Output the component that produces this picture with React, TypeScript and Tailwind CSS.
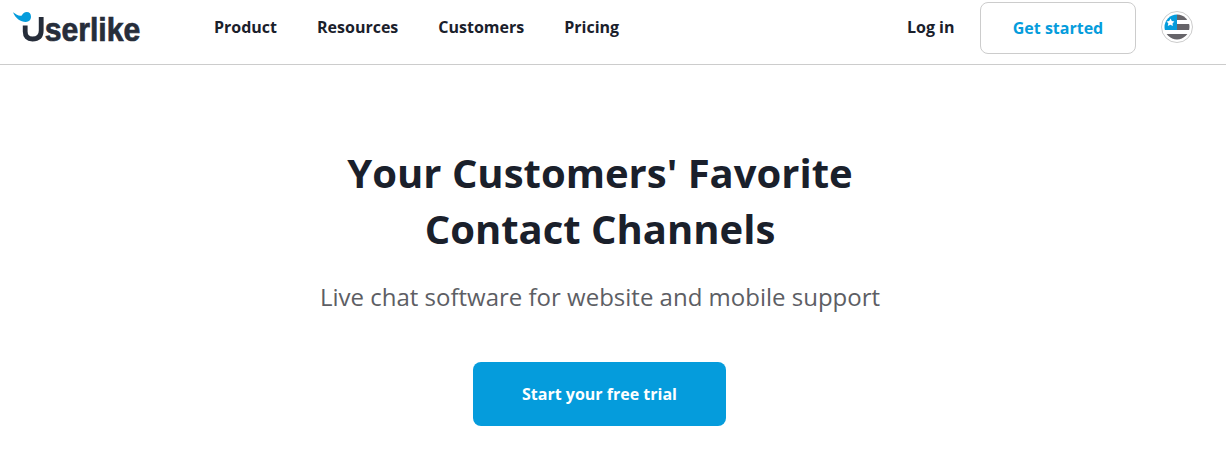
export default function App() {
  return (
    <div className="h-[466px] w-full overflow-hidden bg-white font-['Open_Sans',sans-serif] text-[#1a202b]">
      <header className="flex h-[65px] items-start border-b border-[#cccccc] pl-[13px] pr-[33px]">
        <a className="mt-[10px] block h-9 w-[128px]" aria-label="Userlike">
          <svg className="overflow-visible" width="128" height="36" viewBox="0 0 128 36">
            <path d="M0 2.3C3.5 4.8 6.5 6.6 8.8 5.4C10 3.3 11.3 2 13.8 2C16.5 2 18 4 18 6.8C18 9.8 16 12 12.8 12C7.5 12 2.6 8.6 0 2.3Z" fill="#059cdc" />
            <path d="M12.2 15.5V21.5Q12.2 29 19.4 29Q28.2 29 28.2 20.5V7" fill="none" stroke="#262d3a" strokeWidth="4.8" />
            <text x="31.7" y="30.8" fontFamily="Liberation Sans, sans-serif" fontWeight="700" fontSize="33" textLength="95.6" lengthAdjust="spacingAndGlyphs" fill="#262d3a" stroke="#262d3a" strokeWidth="0.7">serlike</text>
          </svg>
        </a>
        <nav className="ml-[73px] mt-[15px] flex gap-10 text-base font-bold leading-6">
          <a>Product</a><a>Resources</a><a>Customers</a><a>Pricing</a>
        </nav>
        <div className="ml-auto flex items-start font-bold">
          <a className="mt-[15px] leading-6">Log in</a>
          <button className="ml-[25.5px] mt-[2px] h-[52px] w-[156px] rounded-lg border border-[#cccccc] font-bold text-[#059cdc]">Get started</button>
          <button className="ml-[25px] mt-[11px] size-8" aria-label="Language">
            <svg width="32" height="32" viewBox="0 0 32 32">
              <defs><clipPath id="flag"><circle cx="16" cy="16" r="12.5" /></clipPath></defs>
              <circle cx="16" cy="16" r="15.5" fill="#fff" stroke="#cccccc" />
              <g clipPath="url(#flag)">
                <path d="M16 3H29V9H16ZM16 13H29V19H16ZM3 23H29V29H3Z" fill="#666469" />
                <path d="M3 3H16V19H3Z" fill="#059cdc" />
                <path d="M9.6 7.4L10.8 10L13.4 10.5L11.5 12.5L11.9 15L9.4 13.8L6.8 15L7.3 12.2L5.5 10.4L8.2 10Z" fill="#fff" />
              </g>
            </svg>
          </button>
        </div>
      </header>
      <main className="flex flex-col items-center pr-[26px] pt-[80px]">
        <h1 className="text-center text-[40px] font-bold leading-[56px]">Your Customers' Favorite<br />Contact Channels</h1>
        <p className="mt-[22px] text-2xl leading-9 text-[#5d5e64]">Live chat software for website and mobile support</p>
        <button className="mt-[47px] mr-px h-16 w-[253px] rounded-lg bg-[#059cdc] font-bold text-white">Start your free trial</button>
      </main>
    </div>
  );
}
